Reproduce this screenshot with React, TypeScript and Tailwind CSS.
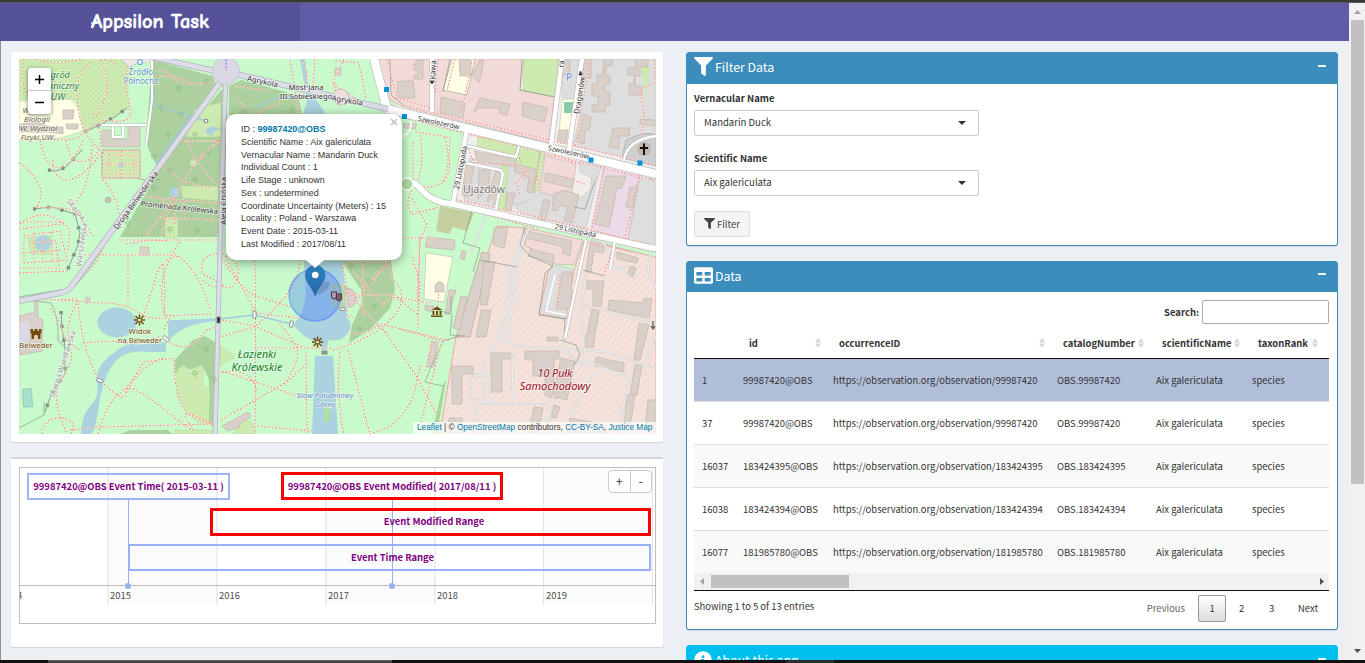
import React from "react";
import { FaFilter, FaTable, FaInfoCircle } from "react-icons/fa";

const rows = [
  ["1", "99987420"],
  ["37", "99987420"],
  ["16037", "183424395"],
  ["16038", "183424394"],
  ["16077", "181985780"],
];

const cols = "grid grid-cols-[41px_90px_224px_99px_96px_85px]";

const woods = [
  "M152 60L175 66 213 76 216 85 157 166 148 148 146 140Z",
  "M221 90L223 90 220 237H120L157 174 171 152Z",
  "M229 86L241 80 286 92 299 99 302 115H229Z",
  "M241 82L270 87 262 95Z",
  "M342 261H391L395 290 390 308 372 328 349 343 352 325 362 303 361 290Z",
  "M175 360L193 340 205 336 215 342 214 430 208 420 209 380 202 365 190 370 183 365 175 374Z",
  "M120 434L130 430H168L172 434Z",
  "M443 385L446 380 437 434H432Z",
];

const meadows = [
  "M177 370L183 365 190 374 197 366 203 367 203 385 210 390 209 423 200 425 187 412 177 392Z",
  "M220 345L235 357 220 366Z",
  "M524 59H560L554 97 523 90Z",
  "M478 134L518 145 514 157 477 147Z",
  "M519 145L545 152 538 192 519 164 515 162Z",
  "M181 186H218V201L182 198Z",
  "M165 217H178V238H165Z",
  "M194 110L221 102V137H186Z",
  "M175 430H212V434H175Z",
  "M243 420L252 421 256 434H233Z",
  "M28 238L50 236 53 254 31 254Z",
  "M502 165L508 165 505 210H498Z",
];

const pinks = [
  "M373 59H524L520 90 554 97 549 143 404 107 390 100Z",
  "M545 155L576 164 571 200 540 192Z",
  "M526 228L583 240 574 265 555 264 525 245Z",
  "M591 240L656 258V290L600 262Z",
];

const greys = [
  "M588 59H656V163L573 146 580 115Z",
  "M563 59L580 59 576 100 562 97Z",
  "M470 158L515 165 538 175 535 200 497 208 464 200Z",
  "M538 193L575 202 590 190 592 175 600 168 586 229 522 214 514 206 530 200Z",
  "M547 272L556 265 579 271 568 318 539 314Z",
  "M591 240L607 244 603 275 587 272Z",
  "M580 160L602 166 596 180 580 172Z",
  "M640 174L656 178V244L628 240Z",
];

const buildings = [
  "M397 82L413 80 415 98 398 98Z",
  "M416 60H423V79H414V75H418V70H414V64H416Z",
  "M441 97L465 103 463 118 440 113Z",
  "M459 59H471V76H460Z",
  "M480 98L510 104 507 115 499 113 500 108 478 108 474 112Z",
  "M523 102L548 108 544 122 522 116Z",
  "M472 75L480 60 484 61 479 83Z",
  "M604 59H612V66H606V76H610V84H605V92H610V105H605V112H592V105H598V96H592V84H597V75H603Z",
  "M635 59H648V67H640V76H635V86H642V95H629V84H634V75H628V68H636Z",
  "M583 114L591 117 590 128 585 131 584 144 577 142 580 130Z",
  "M613 128H630L629 136H619V149L609 147Z",
  "M474 151L510 158 516 157V167L478 162Z",
  "M466 164L474 164 469 197 462 195Z",
  "M479 170H490L488 188 478 199Z",
  "M496 171L503 173 496 205 487 201Z",
  "M514 164L536 169 532 193 527 192 529 178 515 172Z",
  "M507 193L515 193 511 211H505Z",
  "M546 173L574 179 571 188 544 181Z",
  "M544 199L550 201 545 222H538Z",
  "M564 190L579 195 572 223 564 221 568 207 560 205 557 211 552 210 554 194Z",
  "M606 176H626L622 188H617L609 227 595 224Z",
  "M630 187L637 187 633 209 626 207Z",
  "M558 59H570V75H558Z",
  "M584 59H591V78H583Z",
  "M559 130H568L566 144 557 142Z",
  "M640 119L655 120 654 126 640 124Z",
  "M494 228L508 226 504 248 493 245Z",
  "M527 231L572 241 570 256 562 253 564 247 526 238Z",
  "M531 249L554 255 553 263 528 256Z",
  "M590 244L605 247 603 253 594 251 591 272H586Z",
  "M562 272H572L571 309H556Z",
  "M484 262H495L487 305H480Z",
  "M481 310H491L486 337H476Z",
  "M452 366H473V374H462V404H452Z",
  "M491 353H513V359H502V392H491Z",
  "M525 351H559V359H554V385H559V398H552L545 395V376H533V360H525Z",
  "M587 281H604L601 306H593V289H587Z",
  "M592 309L599 311 593 347H584Z",
  "M609 300L642 303 645 298 652 299 649 318 608 310Z",
  "M639 323L649 325 640 360H634Z",
  "M635 365H642L637 395H630Z",
  "M627 395H635L630 427H624Z",
  "M596 357L624 363V372L595 366Z",
  "M561 358L575 361 567 400 553 396Z",
  "M534 407L543 408 538 434H528Z",
  "M554 405L560 407 556 418H551Z",
  "M570 418L606 425V434H568Z",
  "M648 400H656V432L645 428Z",
  "M449 418H462V434H445Z",
  "M428 237L455 240 454 250 425 247Z",
  "M449 290L456 290 449 314H445Z",
  "M461 296L467 297 460 330 453 328Z",
  "M432 342H438L434 367H427Z",
  "M547 337H558V341H547Z",
  "M19 316L35 312 34 301 38 302V318L43 320 42 351 20 355 19 345Z",
  "M102 130H110V139H128V125H140V147H102Z",
  "M63 110H74L73 119H63Z",
  "M66 124H78V129H67Z",
  "M20 124L37 122 50 127H63V134L48 132H20Z",
  "M140 247H149V255H140Z",
  "M222 426L248 412 251 417 239 424 240 427 228 431Z",
  "M86 297L90 298 89 303H85Z",
  "M335 68H341V75H335Z",
  "M403 123L417 124 415 129 404 128Z",
  "M425 305L434 306 433 312 425 310Z",
  "M462 250L466 252 464 260 460 258Z",
  "M617 252L638 258 637 263 617 259Z",
  "M630 266L636 268 633 277 628 276Z",
  "M348 288Q357 290 357 300Q354 308 348 307Z",
  "M435 285Q440 278 444 285V292H435Z",
];

const footpaths = [
  "M24 59Q19 82 28 95T60 98M36 59Q55 65 78 60T117 64",
  "M90 62Q75 76 77 98T84 130 100 150",
  "M100 60Q112 80 104 101T94 113",
  "M128 66Q124 86 130 106T104 120Q86 129 77 139L19 140",
  "M40 140Q46 170 60 167T84 138",
  "M53 160Q53 178 66 180T104 150",
  "M66 140Q70 168 88 160T98 125",
  "M19 163Q31 170 38 183T36 207L52 208Q74 206 82 220T85 238",
  "M92 145Q90 190 72 206L93 236M103 180Q119 196 121 230",
  "M20 224Q33 214 45 215T70 230L68 250",
  "M24 236L60 231 67 260 24 263ZM29 243L56 241 59 268M22 253L62 250M34 232V262M43 232V262M52 232V264",
  "M19 222H66M19 229L60 224M19 268L62 268M19 273L67 271",
  "M103 151H140V178H102ZM109 155H134V174H109ZM121 151V178M103 164H140",
  "M157 69Q171 72 174 79T206 83 219 88M158 76Q180 76 190 83",
  "M160 165L184 182 212 188M186 139L194 158 220 190M218 140Q190 168 182 184T145 236",
  "M183 141H221M193 163L221 139M155 196L170 206 161 237M145 196L174 200 220 203",
  "M175 197V225M161 218L219 220M183 197L185 218M119 240H221",
  "M101 240L101 241M106 240Q96 270 82 275M84 255L178 255M126 244L150 240 168 241",
  "M128 255L128 302M178 256Q160 260 156 276T143 317M178 256Q198 270 211 311",
  "M180 242Q159 270 162 302L166 320",
  "M163 264Q166 302 164 316L211 314M171 315L164 330",
  "M61 300L100 303Q127 302 146 317L163 319M78 303Q84 365 105 385T126 392 165 410 189 423 212 425",
  "M43 300L78 299Q68 320 68 330T71 350 63 377 60 416 68 434",
  "M50 308Q60 320 62 330T80 350M83 343L112 341Q145 347 160 336",
  "M42 434Q44 417 61 418T71 434M70 430L100 427 212 424",
  "M98 434Q108 401 119 394T143 362L176 358M126 393Q138 368 163 358",
  "M174 360Q174 397 186 412L214 425M167 340Q190 357 205 331L215 327",
  "M203 260Q216 249 229 257T237 279 221 285 205 275 203 261",
  "M224 285Q210 290 203 280M223 253L256 313 300 318M300 260Q300 290 254 327L220 337",
  "M220 255Q234 281 253 295L291 307M255 257Q256 340 255 434",
  "M222 320L254 326 303 347M221 420L285 383Q304 355 294 343L279 322",
  "M221 373Q250 366 257 391M222 371L306 399M306 352L307 434M257 348H333",
  "M257 426L312 431M304 366L285 384",
  "M257 113L281 102M232 93L248 111M290 60L299 115M302 61Q315 82 295 98M315 59L312 99",
  "M234 86L269 91M335 61L359 63 366 98M344 59L332 84 359 100",
  "M335 82Q333 97 352 101",
  "M413 142L413 183M415 132L448 137M420 135Q425 166 416 184Q428 190 440 184T449 156L450 137",
  "M445 137Q452 165 443 181M412 190Q404 202 412 214L440 207",
  "M412 198L427 225 420 240 417 300M400 238H437",
  "M344 262L383 305 391 297 431 303M351 262H389L357 300 343 285M391 260L360 290M341 264Q348 280 347 316L355 318",
  "M363 262V317M347 295H395L418 315 418 328M354 300L385 332",
  "M333 350Q370 340 391 319T391 277L388 261M348 329Q357 340 381 324L450 341",
  "M340 352Q336 397 344 434M348 350L370 434 389 427Q414 408 417 378L421 364",
  "M383 329L417 377 436 413M400 329L442 341 430 387 418 434M432 341L425 371M418 315L420 282 412 257",
  "M420 238L418 311M437 310L439 293",
  "M389 102L404 117 420 119M387 59L397 98 434 109",
  "M438 59L434 108M462 110L472 60M455 59L447 90",
  "M548 144L560 59M575 146L590 61M654 60L655 82 640 90 645 119 640 138",
  "M395 111L656 171M402 105L656 165M404 118L655 181",
  "M469 145L511 156M474 164L467 144M464 164L454 201",
  "M526 171L516 183 520 194M518 150L524 180M470 162L515 165M537 172L540 191",
  "M454 207L514 220 656 252M470 210L520 224 540 229M453 199L530 215 656 246",
  "M605 166L592 230M639 174L625 238M540 154L534 192M566 178L585 184",
  "M554 155L580 164M616 240L603 276M559 276V308M587 239L584 258",
];

const serviceRoads = [
  "M530 226L511 269 504 330 483 363V404H548L553 435",
  "M519 241L512 291 497 337 519 346 607 352 640 364 656 367",
  "M512 347L513 403M563 340L567 353 590 368M586 275L581 310 585 360 630 378 626 395 618 434",
  "M583 305L655 323M656 336L645 363M470 375L490 376V402L471 400V376",
  "M601 237L615 268 630 276M471 252L492 200M478 405L471 434",
  "M525 245L518 261 508 340M554 395L544 434M596 372L570 414",
  "M651 252L648 270 656 288M610 268H626",
];

const fences = [
  "M19 297L72 288Q84 280 108 239M19 428L44 415V402",
  "M36 301L51 303Q59 316 58 340L66 349",
  "M390 59L391 95 405 106M450 59L443 92M522 59L520 90 555 97",
  "M525 226L520 245 530 256 553 266 545 273 539 315 565 319",
  "M451 296V314L434 309M452 315L450 335 465 336M459 336L443 341 430 369 425 382 443 386",
  "M454 205L472 211 463 243 480 248 473 272",
  "M480 260L517 267M574 207L585 209 595 181M640 169L655 182M560 340L576 345 580 355 574 365",
  "M540 150L534 193M565 318L564 340M583 270L605 276",
  "M155 180L160 179M135 178L145 180",
];

const tracks = [
  "M48 170L56 171 66 167 79 153 82 150",
  "M33 209L52 207 75 214 80 233 78 245 67 271",
  "M61 311L62 328 65 348 65 374 52 392 45 412",
  "M84 132L100 125 116 116 127 108",
];

const trees: [number, number][] = [
  [179, 89], [161, 108], [181, 115], [206, 82], [168, 135], [154, 157], [195, 135],
  [170, 171], [154, 188], [195, 180], [209, 153], [128, 224], [197, 231], [170, 230],
  [245, 112], [292, 110], [351, 267], [369, 282], [374, 307], [360, 329], [206, 350],
  [195, 374], [214, 380],
];

type LabelProps = {
  x: number;
  y: number;
  size?: number;
  color?: string;
  rotate?: number;
  italic?: boolean;
  bold?: boolean;
  anchor?: "start" | "middle" | "end";
  children: React.ReactNode;
};

function Label({ x, y, size = 8, color = "#333", rotate = 0, italic, bold, anchor = "middle", children }: LabelProps) {
  return (
    <text
      x={x}
      y={y}
      textAnchor={anchor}
      fontSize={size}
      fill={color}
      fontStyle={italic ? "italic" : "normal"}
      fontWeight={bold ? 700 : 400}
      transform={`rotate(${rotate} ${x} ${y})`}
      stroke="#ffffff"
      strokeOpacity={0.6}
      strokeWidth={1.6}
      paintOrder="stroke"
    >
      {children}
    </text>
  );
}

function Spark({ x, y }: { x: number; y: number }) {
  return (
    <g stroke="#734a08" strokeWidth="1.5" transform={`translate(${x + 0.5} ${y})`}>
      <path d="M0 -5.500V-1.300M0 1.300V5.500M-5.500 0H-1.500M1.500 0H5.500M-4 -4L-1 -1M4 -4L1 -1M-4 4L-1 1M4 4L1 1" />
    </g>
  );
}

function MapCanvas() {
  return (
    <svg viewBox="19 59 637 375" className="block h-[375px] w-[637px] font-['Noto_Sans',sans-serif]">
      <defs>
        <pattern id="hatch" width="5" height="5" patternUnits="userSpaceOnUse" patternTransform="rotate(45)">
          <path d="M0 0V5" stroke="#f1cdc6" strokeWidth="1" />
        </pattern>
        <pattern id="dots" width="5" height="5" patternUnits="userSpaceOnUse">
          <circle cx="1" cy="1" r=".5" fill="#a9cf95" />
          <circle cx="3.5" cy="3.5" r=".5" fill="#a9cf95" />
        </pattern>
        <linearGradient id="pin" x1="0" y1="0" x2="0" y2="1">
          <stop offset="0" stopColor="#2e83c4" />
          <stop offset="1" stopColor="#2267a4" />
        </linearGradient>
      </defs>
      <rect x="19" y="59" width="637" height="375" fill="#c8facc" />

      <path d="M19 59H134L128 85 130 108 84 132 76 100 19 100Z" fill="#cdebb0" />
      <path d="M19 59H134L128 85 130 108 84 132 76 100 19 100Z" fill="url(#dots)" />
      <path d="M121 59H152L150 62 136 64 129 67Z" fill="#eee9e2" stroke="#bbb" strokeWidth=".5" />
      <path d="M19 101L71 99 80 110 83 131 60 138 19 140Z" fill="#ffffe5" stroke="#c8c0a0" strokeWidth=".5" />
      <path d="M375 59H656V250L453 205 467 130 404 118Z" fill="#f1eeea" />
      <path d="M395 117L466 133 452 203 420 190 405 160Z" fill="#c8facc" />
      <path d="M462 206L495 214 492 228 480 225 470 250 463 290 440 430 656 434 656 256Z" fill="#c8facc" />

      {woods.map((d) => <path key={d} d={d} fill="#add19e" />)}
      {pinks.map((d) => <path key={d} d={d} fill="#f2dad9" stroke="#c9a9a6" strokeWidth=".6" />)}
      {greys.map((d) => <path key={d} d={d} fill="#dedede" stroke="#bbbbbb" strokeWidth=".5" />)}
      {meadows.map((d) => <path key={d} d={d} fill="#cdebb0" stroke="#9cc684" strokeWidth=".3" />)}

      <path d="M497 226L524 228 525 245 553 264 548 272 539 314 566 319 574 270 584 241 656 257V434H440L456 336H467L486 258Z" fill="#f3e3dc" />
      <path d="M497 226L524 228 525 245 553 264 548 272 539 314 566 319 574 270 584 241 656 257V434H440L456 336H467L486 258Z" fill="url(#hatch)" stroke="#ee9090" strokeWidth=".7" />
      <path d="M482 252L490 254 470 337 456 337Z" fill="#d9d0c9" stroke="#c59f99" strokeWidth=".7" />
      <path d="M604 165L640 174 628 239 591 230Z" fill="#ebdbe8" stroke="#c9a9c4" strokeWidth=".6" />
      <path d="M452 59H475L467 95 443 90Z" fill="#ffffe5" stroke="#999" strokeWidth=".6" />
      <path d="M426 253L453 257 444 302 424 299Z" fill="#ffffe5" stroke="#bbb" strokeWidth=".6" />
      <path d="M562 100L576 98 572 130 559 134Z" fill="#ffffe5" stroke="#bbb" strokeWidth=".5" />
      <rect x="564" y="102" width="9" height="11" fill="#88ccb0" />
      <path d="M440 206L474 213 467 231 453 227 449 234 436 231Z" fill="#c5cf9f" />
      <path d="M641 67H650L646 98Z" fill="#cdebb0" />
      <path d="M102 150H140V178H102Z" fill="#cdebb0" stroke="#b3a89c" strokeWidth="1" />
      <path d="M626 140Q648 130 656 135V166L622 158Z" fill="#cfcfcf" stroke="#b5b5b5" />

      <g fill="#aad3df">
        <ellipse cx="117" cy="322.500" rx="19.500" ry="15" />
        <path d="M168 320Q184 320 218 318L219 321Q200 322 188 327T168 341Z" />
        <path d="M166 342V352L150 352Q125 349 114 363T99 405 91 434H81Q82 414 91 405T97 382 112 354 135 345Z" />
        <path d="M304 261H343L345 290 347 318Q354 324 348 333T329 340L326 350H321V342Q309 341 302 334T293 325Q304 314 306 295Z" />
        <path d="M315 356H333L338 434H312Z" />
        <path d="M300 59H305L309 92Q320 103 326 115H303L307 100Z" />
        <rect x="170" y="188" width="9" height="9" />
        <circle cx="43" cy="243" r="8" />
        <path d="M206 129L212 126 221 129 214 131 212 136 206 133Z" />
        <circle cx="121" cy="165" r="3" />
      </g>
      <path d="M153 85L154 105 190 116 156 165M220 319L254 315 292 324M190 116L209 122M255 108L275 98 303 96" fill="none" stroke="#a1cbdc" strokeWidth="1.600" />
      <path d="M325 407H330L329 422H324Z" fill="#b6df9e" />
      <path d="M348 287Q329 276 329 292T343 311Z" fill="#b9d6ae" />

      {buildings.map((d) => <path key={d} d={d} fill="#d9d0c9" stroke="#c6b5aa" strokeWidth=".7" />)}
      <path d="M19 323L29 321V341L19 344Z" fill="#dad9e6" />
      <rect x="23" y="389" width="9" height="18" fill="#aae0cb" stroke="#7fbfa5" strokeWidth=".6" transform="rotate(-4 27 398)" />

      <g fill="none" stroke="#cfd0d2" strokeWidth="2.200">
        {serviceRoads.map((d) => <path key={d} d={d} />)}
      </g>
      <g fill="none" stroke="#eeeeee" strokeWidth="1.200">
        {serviceRoads.map((d) => <path key={d} d={d} />)}
      </g>

      <g fill="none" stroke="#8b9a8c" strokeWidth=".7">
        {fences.map((d) => <path key={d} d={d} />)}
      </g>
      <g fill="none" stroke="#8f9a90" strokeWidth="1">
        {tracks.map((d) => <path key={d} d={d} />)}
      </g>
      <g fill="none" stroke="#868e87" strokeWidth="3.500" strokeDasharray="3 11">
        {tracks.map((d) => <path key={d} d={d} />)}
      </g>
      <g fill="none" stroke="#ffffff" strokeOpacity=".35" strokeWidth="1.800">
        {footpaths.map((d) => <path key={d} d={d} />)}
      </g>
      <g fill="none" stroke="#f8958a" strokeWidth="1.100" strokeDasharray="2 1.600">
        {footpaths.map((d) => <path key={d} d={d} />)}
      </g>

      <g fill="none" stroke="#b9b9b9" strokeLinejoin="round">
        <path d="M152 59V100L146 145M102 125H146M113 125V137H123V125" strokeWidth="3" />
        <path d="M374 59L387 109 656 174" strokeWidth="9.500" />
        <path d="M404 182Q414 180 423 191T452 204L656 249" strokeWidth="7" />
        <path d="M432 59V112M562 59L551 145M582 59L569 150M467 129L453 203" strokeWidth="5.500" />
        <path d="M586 240L565 338M467 146L516 157 519 146M466 163L500 170Q504 172 502 178L496 209M624 160Q627 140 656 136M615 241L610 270" strokeWidth="3.500" />
      </g>
      <g fill="none" stroke="#ffffff" strokeLinejoin="round">
        <path d="M152 59V100L146 145M102 125H146M113 125V137H123V125" strokeWidth="2" />
        <path d="M374 59L387 109 656 174" strokeWidth="8.300" />
        <path d="M404 182Q414 180 423 191T452 204L656 249" strokeWidth="5.800" />
        <path d="M432 59V112M562 59L551 145M582 59L569 150M467 129L453 203" strokeWidth="4.300" />
        <path d="M586 240L565 338M467 146L516 157 519 146M466 163L500 170Q504 172 502 178L496 209M624 160Q627 140 656 136M615 241L610 270" strokeWidth="2.400" />
        <path d="M555 275L546 311 566 315" strokeWidth="1.500" />
      </g>
      <path d="M397 139Q412 134 411 122" fill="none" stroke="#fff" strokeWidth="1.600" />
      <circle cx="407" cy="184" r="6" fill="#b4dba0" stroke="#fff" strokeWidth="1.500" />

      <g fill="none" stroke="#b2b1c2" strokeLinejoin="round">
        <path d="M222 80L71 287Q67 292 60 293L19 301" strokeWidth="6" />
        <path d="M225.500 82L220 250 215 434" strokeWidth="5" />
        <path d="M152 57L215 71M236 74L340 98 388 109" strokeWidth="6" />
      </g>
      <g fill="none" stroke="#dddde8" strokeLinejoin="round">
        <path d="M222 80L71 287Q67 292 60 293L19 301" strokeWidth="4.600" />
        <path d="M225.500 82L220 250 215 434" strokeWidth="3.600" />
        <path d="M152 57L215 71M236 74L340 98 388 109" strokeWidth="4.600" />
      </g>
      <circle cx="226" cy="71" r="13.500" fill="#d9d8e4" stroke="#c0bfd0" strokeWidth=".7" />
      <path d="M226 59V70" stroke="#6c6cf0" strokeDasharray="2 1.500" />
      <circle cx="341" cy="97" r="8" fill="#efdcdc" stroke="#cbb3b3" strokeWidth=".8" />
      <circle cx="193" cy="163" r="3" fill="#cdebb0" stroke="#ccb" strokeWidth=".6" />
      <circle cx="140" cy="62" r="2.500" fill="#e8f6ff" stroke="#70a9d8" strokeWidth="1.200" />
      <circle cx="108" cy="200" r="3" fill="#cdbfb8" stroke="#a9bca8" strokeWidth=".7" />
      <circle cx="206" cy="121" r="1.800" fill="#fff" stroke="#666" strokeWidth=".8" />

      <g fill="none" stroke="#8dbb84" strokeWidth=".8">
        {trees.map(([x, y]) => (
          <path key={`${x}-${y}`} d={`M${x} ${y + 4}V${y}M${x - 2.5} ${y}A2.500 3 0 1 1 ${x + 2.5} ${y}Z`} />
        ))}
      </g>
      <g fill="#fff" stroke="#777" strokeWidth=".7">
        <rect x="97" y="379" width="6" height="3" transform="rotate(25 100 380)" />
        <rect x="163" y="337" width="7" height="3" transform="rotate(40 166 338)" />
        <rect x="253" y="311" width="3" height="7" />
        <rect x="290" y="321" width="3" height="6" transform="rotate(15 291 324)" />
        <rect x="217" y="317" width="3" height="6" fill="#333" />
        <rect x="340" y="308" width="5" height="2.500" />
        <rect x="322" y="351" width="5" height="3" fill="#999" />
      </g>
      <g fill="#0092da">
        <rect x="384" y="87" width="5" height="5" />
        <rect x="402" y="114" width="5" height="5" />
        <rect x="637.500" y="160.500" width="5" height="5" />
      </g>
      <circle cx="644" cy="149" r="7" fill="#c4b6ab" />
      <path d="M643 143.500H645V147H648V149H645V155H643V149H640V147H643Z" fill="#111" />
      <Label x={569} y={81} size={10} color="#4f92cf">P</Label>
      <path d="M432 84L430 81H434ZM580.500 71L579 75H582Z" fill="#333" stroke="#333" strokeWidth=".8" />
      <path d="M653 321V328M651 326L653 329 655 326" stroke="#555" fill="none" strokeWidth="1.200" />

      <g fill="#734a08">
        <path d="M30.500 329H33V331H34.500V329H37.500V331H39V329H41.500V333L40.500 334V339H38V336Q36 333.500 34 336V339H31.500V334L30.500 333Z" />
        <path d="M431.500 310L437 306.500 442.500 310ZM432.500 311H434.500V315H432.500ZM436 311H438V315H436ZM439.500 311H441.500V315H439.500ZM431 315.500H442.500V317H431Z" />
      </g>
      <Spark x={139} y={320} />
      <Spark x={317} y={342} />

      <Label x={70} y={78} size={9.3} color="#2d8643" italic anchor="end">Ogród</Label>
      <Label x={79} y={89} size={9.3} color="#2d8643" italic anchor="end">Botaniczny</Label>
      <Label x={58} y={99.5} size={9.3} color="#2d8643" italic>UW</Label>
      <Label x={36} y={113} size={7.8} color="#68623f" italic>Wydział</Label>
      <Label x={37} y={122} size={7.8} color="#68623f" italic>Biologii</Label>
      <Label x={57} y={131} size={7.8} color="#68623f" italic anchor="end">UW, Wydział</Label>
      <Label x={37} y={140} size={7.8} color="#68623f" italic>Fizyki UW</Label>
      <Label x={141} y={75} size={8} color="#6795c2">Źródło</Label>
      <Label x={141} y={84} size={8} color="#6795c2">Północne</Label>
      <Label x={262} y={84} size={7.6} rotate={12}>Agrykola</Label>
      <Label x={306} y={90} size={7.6}>Most Jana</Label>
      <Label x={306} y={99} size={7.6}>III Sobieskiego</Label>
      <Label x={347} y={103} size={7.6} rotate={9}>Agrykola</Label>
      <Label x={138} y={202} size={7.6} rotate={-54}>Droga Belwederska</Label>
      <Label x={179} y={210} size={7.4} rotate={6}>Promenada Królewska</Label>
      <Label x={226} y={201} size={7.6} rotate={-90}>Aleja Chińska</Label>
      <Label x={435.5} y={70} size={7.6} rotate={-88}>Kawa</Label>
      <Label x={564} y={64} size={7.6} rotate={-88}>ra</Label>
      <Label x={582} y={96} size={7.6} rotate={-81}>Dragonów</Label>
      <Label x={438} y={125} size={7} rotate={12}>Szwoleżerów</Label>
      <Label x={568} y={154.5} size={7} rotate={12}>Szwoleżerów</Label>
      <rect x="588.500" y="157.500" width="5" height="5" fill="#0092da" />
      <Label x={463} y={168} size={7.4} rotate={-79}>29 Listopada</Label>
      <Label x={575} y={233} size={7} rotate={12}>29 Listopada</Label>
      <Label x={484} y={193} size={10.5} color="#777">Ujazdów</Label>
      <Label x={74} y={211} size={7.6} color="#999" rotate={50}>Skarpa</Label>
      <Label x={84} y={245} size={7.6} color="#999" rotate={-82}>Warszawska</Label>
      <Label x={65} y={365} size={7.6} color="#999" rotate={-72}>Skarpa Warszawska</Label>
      <Label x={140} y={333.5} size={7.6} color="#734a08">Widok</Label>
      <Label x={140} y={342.5} size={7.6} color="#734a08">na Belweder</Label>
      <Label x={36} y={347.5} size={7.6} color="#734a08">Belweder</Label>
      <Label x={257} y={357.5} size={10.7} color="#108020" italic>Łazienki</Label>
      <Label x={257} y={370.5} size={11} color="#108020" italic>Królewskie</Label>
      <Label x={325} y={398} size={7.6} color="#5f8fbe" italic>Staw Południowy</Label>
      <Label x={325} y={407} size={7.6} color="#5f8fbe" italic>Górny</Label>
      <Label x={555} y={376.5} size={10.7} color="#980d22" italic>10 Pułk</Label>
      <Label x={555} y={389.5} size={11} color="#980d22" italic>Samochodowy</Label>

      <circle cx="315" cy="295" r="26" fill="#3366ff" fillOpacity=".3" stroke="#3366ff" strokeOpacity=".4" strokeWidth="1.500" />
      <g fill="none" stroke="#553a44" strokeWidth="1.100">
        <path d="M331.500 292H336.500V297Q334 301 331.500 297Z" fill="#a59bc0" />
        <path d="M336.500 294H341.500V299Q339 303 336.500 299Z" fill="#77606f" />
      </g>
      <ellipse cx="322" cy="288" rx="9" ry="4" fill="#222" fillOpacity=".18" transform="rotate(-38 322 288)" />
      <path d="M305.500 275A9.700 9.700 0 0 1 325 275C325 282 318 287 315.200 296C312 287 305.500 282 305.500 275Z" fill="url(#pin)" stroke="#2a70aa" strokeWidth=".7" />
      <circle cx="315.200" cy="275" r="3.300" fill="#fff" />
    </svg>
  );
}

function Popup() {
  return (
    <div className="absolute left-[207px] top-[55px] h-[146px] w-[176px] rounded-[10px] bg-white pl-[15px] pt-[9px] font-['Liberation_Sans',Arial,sans-serif] text-[8.97px] leading-[12.75px] text-[#333] shadow-[0_2px_11px_rgba(0,0,0,0.4)]">
      <div className="whitespace-nowrap">
        <span>ID : </span>
        <b className="text-[#0078a8]">99987420@OBS</b>
      </div>
      <div className="whitespace-nowrap">Scientific Name : Aix galericulata</div>
      <div className="whitespace-nowrap">Vernacular Name : Mandarin Duck</div>
      <div className="whitespace-nowrap">Individual Count : 1</div>
      <div className="whitespace-nowrap">Life Stage : unknown</div>
      <div className="whitespace-nowrap">Sex : undetermined</div>
      <div className="whitespace-nowrap">Coordinate Uncertainty (Meters) : 15</div>
      <div className="whitespace-nowrap">Locality : Poland - Warszawa</div>
      <div className="whitespace-nowrap">Event Date : 2015-03-11</div>
      <div className="whitespace-nowrap">Last Modified : 2017/08/11</div>
      <svg viewBox="0 0 8 8" className="absolute right-[4px] top-[4px] size-[8px]">
        <path d="M1 1L7 7M7 1L1 7" stroke="#c0c0c0" strokeWidth="1.600" />
      </svg>
      <svg viewBox="0 0 18 9" className="absolute left-[80px] top-[145.5px] h-[9px] w-[18px]">
        <path d="M0 0H18L9 8Z" fill="#fff" />
      </svg>
    </div>
  );
}

function MapBox() {
  return (
    <section className="h-[390px] w-[652px] rounded-[2px] bg-white pl-[8px] pt-[7px] shadow-[0_1px_1px_rgba(0,0,0,0.12)]">
      <div className="relative h-[375px] w-[637px] overflow-hidden">
        <MapCanvas />
        <Popup />
        <div className="absolute left-[9px] top-[9px] flex h-[46px] w-[23px] flex-col rounded-[3px] bg-white shadow-[0_1px_4px_rgba(0,0,0,0.5)]">
          <svg viewBox="0 0 23 46" className="h-[46px] w-[23px]">
            <path d="M7 11.500H16M11.500 7V16M7 34.500H16" stroke="#000" strokeWidth="1.500" />
            <path d="M0 22.500H23" stroke="#ccc" />
          </svg>
        </div>
        <div className="absolute bottom-0 right-0 flex h-[12px] w-[243px] items-center whitespace-nowrap bg-white/70 pl-[4px] font-['Liberation_Sans',Arial,sans-serif] text-[8.26px] text-[#333]">
          <span className="text-[#0078a8]">Leaflet</span>
          <span className="whitespace-pre"> | © </span>
          <span className="text-[#0078a8]">OpenStreetMap</span>
          <span className="whitespace-pre"> contributors, </span>
          <span className="text-[#0078a8]">CC-BY-SA</span>
          <span className="whitespace-pre">, </span>
          <span className="text-[#0078a8]">Justice Map</span>
        </div>
      </div>
    </section>
  );
}

function Timeline() {
  return (
    <section className="mt-[15px] h-[190px] w-[652px] rounded-[2px] border-t-2 border-[#d2d6de] bg-white pl-[8px] pt-[8px] shadow-[0_1px_1px_rgba(0,0,0,0.12)]">
      <div className="relative h-[157px] w-[637px] overflow-hidden border border-[#bfbfbf] text-[9.45px] leading-[14px]">
        <div className="absolute left-[87px] top-0 h-[137px] w-[109px] border-l-2 border-[#eeeeee] bg-[#fcfcfc]" />
        <div className="absolute left-[196px] top-0 h-[137px] w-[109px] border-l-2 border-[#eeeeee]" />
        <div className="absolute left-[305px] top-0 h-[137px] w-[109px] border-l-2 border-[#eeeeee] bg-[#fcfcfc]" />
        <div className="absolute left-[414px] top-0 h-[137px] w-[109px] border-l-2 border-[#eeeeee]" />
        <div className="absolute left-[523px] top-0 h-[137px] w-[110px] border-x border-[#e5e5e5] bg-[#fcfcfc]" />
        <div className="absolute left-0 top-[117px] h-px w-[635px] bg-[#bfbfbf]" />
        <span className="absolute left-[-3px] top-[120px] text-[#4d4d4d]">4</span>
        <span className="absolute left-[90px] top-[120px] text-[#4d4d4d]">2015</span>
        <span className="absolute left-[199px] top-[120px] text-[#4d4d4d]">2016</span>
        <span className="absolute left-[308px] top-[120px] text-[#4d4d4d]">2017</span>
        <span className="absolute left-[417px] top-[120px] text-[#4d4d4d]">2018</span>
        <span className="absolute left-[526px] top-[120px] text-[#4d4d4d]">2019</span>

        <div className="absolute left-[108px] top-[32px] h-[86px] w-px bg-[#97b0f8]" />
        <div className="absolute left-[371.500px] top-[32px] h-[86px] w-[1.500px] bg-[#97b0f8]" />
        <div className="absolute left-[105px] top-[115px] size-[6px] rounded-full bg-[#97b0f8]" />
        <div className="absolute left-[369px] top-[115px] size-[6px] rounded-full bg-[#97b0f8]" />

        <div className="absolute left-[7px] top-[5px] flex h-[27px] w-[203px] items-center justify-center whitespace-nowrap border-2 border-[#9db4f8] pb-[2px] font-bold text-[#800080]">
          99987420@OBS Event Time( 2015-03-11 )
        </div>
        <div className="absolute left-[261px] top-[4px] flex h-[28px] w-[222px] items-center justify-center whitespace-nowrap border-[3px] border-[#ff0000] pb-px font-bold text-[#800080]">
          99987420@OBS Event Modified( 2017/08/11 )
        </div>
        <div className="absolute left-[190px] top-[40px] flex h-[28px] w-[441px] items-center justify-center border-[3px] border-[#ff0000] pb-[2px] pl-[7px] font-bold text-[#800080]">
          Event Modified Range
        </div>
        <div className="absolute left-[108px] top-[76px] flex h-[27px] w-[523px] items-center justify-center border-2 border-[#97b0f8] pb-[2px] pl-[6px] font-bold text-[#800080]">
          Event Time Range
        </div>
        <div className="absolute left-[588px] top-[2px] flex h-[23px] w-[44px] rounded-[4px] border border-[#cccccc] bg-white text-[12px] leading-[20px] text-[#333]">
          <span className="flex-1 border-r border-[#cccccc] text-center">+</span>
          <span className="flex-1 text-center">-</span>
        </div>
      </div>
    </section>
  );
}

function BoxHeader({ icon, title, size = "h-[31px]" }: { icon: React.ReactNode; title: string; size?: string }) {
  return (
    <header className={`flex shrink-0 items-center pl-[7px] pr-[11px] text-white ${size}`}>
      <span className="mt-[-4px] flex w-[21px]">{icon}</span>
      <h3 className="mt-[-3px] flex-1 text-[12.35px] leading-[18px]">{title}</h3>
      <span className="mb-[6px] h-[2px] w-[8px] bg-white/90" />
    </header>
  );
}

function Select({ label, value, className }: { label: string; value: string; className: string }) {
  return (
    <div className={className}>
      <div className="h-[19px] text-[9.5px] font-bold leading-[14px] text-[#333]">{label}</div>
      <div className="flex h-[26px] w-[285px] items-center justify-between rounded-[2px] border border-[#ccc] pl-[9px] pr-[12px] text-[9.55px] leading-[14px] text-[#333]">
        <span className="mt-[-2px]">{value}</span>
        <svg viewBox="0 0 8 4" className="mt-[-1px] h-[4px] w-[8px]">
          <path d="M0 0H8L4 4Z" fill="#333" />
        </svg>
      </div>
    </div>
  );
}

function FilterBox() {
  return (
    <section className="h-[194px] rounded-[3px] border border-[#3c8dbc] bg-[#3c8dbc] shadow-[0_1px_1px_rgba(0,0,0,0.1)]">
      <BoxHeader icon={<FaFilter size={19} />} title="Filter Data" />
      <div className="h-[161px] rounded-b-[2px] bg-white pl-[7px] pt-[7px]">
        <Select className="h-[60px]" label="Vernacular Name" value="Mandarin Duck" />
        <Select className="h-[60px]" label="Scientific Name" value="Aix galericulata" />
        <button className="flex h-[26px] w-[56px] items-center justify-center gap-[2px] rounded-[2px] border border-[#ddd] bg-[#f4f4f4] text-[9.5px] leading-[14px] text-[#444]">
          <FaFilter size={11} className="mt-[-1px]" />
          <span>Filter</span>
        </button>
      </div>
    </section>
  );
}

function Sort() {
  return (
    <svg viewBox="0 0 6 10" className="h-[10px] w-[6px] shrink-0">
      <path d="M0 4.500L3 0 6 4.500ZM0 5.500H6L3 10Z" fill="#d8d8d8" />
    </svg>
  );
}

function HeadCell({ name, pad }: { name: string; pad: string }) {
  return (
    <div className={`flex items-center justify-between pl-[14px] ${pad}`}>
      <span className="pt-px">{name}</span>
      <Sort />
    </div>
  );
}

function DataBox() {
  return (
    <section className="mt-[15px] h-[369px] rounded-[3px] border border-[#3c8dbc] bg-[#3c8dbc] shadow-[0_1px_1px_rgba(0,0,0,0.1)]">
      <BoxHeader icon={<FaTable size={19} />} title="Data" size="h-[30px]" />
      <div className="h-[337px] rounded-b-[2px] bg-white px-[7px] pt-[8px] text-[9.45px] leading-[14px] text-[#333]">
        <div className="flex h-[24px] items-center justify-end gap-[3px] pr-px">
          <span className="font-bold">Search:</span>
          <span className="h-[24px] w-[127px] rounded-[2px] border border-[#aaa] bg-white" />
        </div>
        <div className={`${cols} h-[35px] w-[635px] border-b border-[#111] pt-[3px] font-bold`}>
          <span />
          <HeadCell name="id" pad="pr-[4px]" />
          <HeadCell name="occurrenceID" pad="pr-[4px]" />
          <HeadCell name="catalogNumber" pad="pr-[4px]" />
          <HeadCell name="scientificName" pad="pr-[4px]" />
          <HeadCell name="taxonRank" pad="pr-[11px]" />
        </div>
        {rows.map(([n, id], i) => (
          <div
            key={n}
            className={`${cols} w-[635px] items-center border-[#ddd] pl-[8px] ${i < 4 ? "h-[43px] border-b" : "h-[42px]"} ${
              i === 0 ? "bg-[#b0bed9]" : i % 2 ? "bg-white" : "bg-[#f9f9f9]"
            }`}
          >
            <span>{n}</span>
            <span>{id}@OBS</span>
            <span>https://observation.org/observation/{id}</span>
            <span>OBS.{id}</span>
            <span>Aix galericulata</span>
            <span>species</span>
          </div>
        ))}
        <div className="flex h-[18px] w-[635px] items-center justify-between border-b border-[#111] bg-[#f1f1f1] pl-[6px] pr-[5px]">
          <svg viewBox="0 0 4 7" className="h-[7px] w-[4px]"><path d="M4 0V7L0 3.500Z" fill="#a3a3a3" /></svg>
          <span className="ml-[7px] h-[13px] w-[138px] bg-[#c1c1c1]" />
          <span className="flex-1" />
          <svg viewBox="0 0 4 7" className="h-[7px] w-[4px]"><path d="M0 0V7L4 3.500Z" fill="#505050" /></svg>
        </div>
        <div className="flex h-[34px] justify-between">
          <span className="pt-[8px]">Showing 1 to 5 of 13 entries</span>
          <div className="flex items-center pr-[12px]">
            <span className="mr-[13px] text-[#666]">Previous</span>
            <span className="flex h-[27px] w-[28px] items-center justify-center rounded-[2px] border border-[#979797] bg-gradient-to-b from-white to-[#dcdcdc]">1</span>
            <span className="ml-[13px] w-[30px]">2</span>
            <span className="w-[29px]">3</span>
            <span>Next</span>
          </div>
        </div>
      </div>
    </section>
  );
}

export default function App() {
  return (
    <div className="flex h-[663px] w-[1365px] flex-col overflow-hidden bg-[#ecf0f5] font-['Noto_Sans_CJK_SC',sans-serif]">
      <div className="h-[3px] shrink-0 border-b border-[#5c5c5c] bg-[#383838]" />
      <div className="flex h-[657px] shrink-0">
        <div className="flex w-[1349px] flex-col">
          <header className="flex h-[38px] shrink-0 bg-[#605ca8]">
            <div className="flex w-[300px] items-center justify-center bg-[#555299] font-['Comic_Neue','Comic_Sans_MS','Comic_Sans',cursive] text-[20.4px] font-bold leading-[24px] text-white [-webkit-text-stroke:0.5px_white]">
              Appsilon Task
            </div>
          </header>
          <main className="flex h-[619px] gap-[23px] overflow-hidden border-l border-[#8c9298] pl-[10px] pt-[11px]">
            <div className="w-[652px] shrink-0">
              <MapBox />
              <Timeline />
            </div>
            <div className="w-[652px] shrink-0">
              <FilterBox />
              <DataBox />
              <section className="mt-[15px] h-[100px] rounded-[3px] border border-[#00c0ef] bg-[#00c0ef]">
                <BoxHeader icon={<FaInfoCircle size={18} />} title="About this app" />
              </section>
            </div>
          </main>
        </div>
        <div className="flex w-[16px] flex-col items-center bg-[#f1f1f1] pl-[1px]">
          <svg viewBox="0 0 7 4" className="mt-[7px] h-[4px] w-[7px] shrink-0"><path d="M0 4H7L3.500 0Z" fill="#a3a3a3" /></svg>
          <span className="mt-[6px] h-[464px] w-[13px] shrink-0 bg-[#c1c1c1]" />
          <span className="flex-1" />
          <svg viewBox="0 0 7 4" className="mb-[7px] h-[4px] w-[7px] shrink-0"><path d="M0 0H7L3.500 4Z" fill="#505050" /></svg>
        </div>
      </div>
      <div className="flex h-[3px] shrink-0 bg-[#111]">
        <span className="ml-[48px] w-[344px] border-t border-[#666] bg-[#444]" />
        <span className="ml-[394px] w-[48px] bg-[#2e2e2e]" />
      </div>
    </div>
  );
}
